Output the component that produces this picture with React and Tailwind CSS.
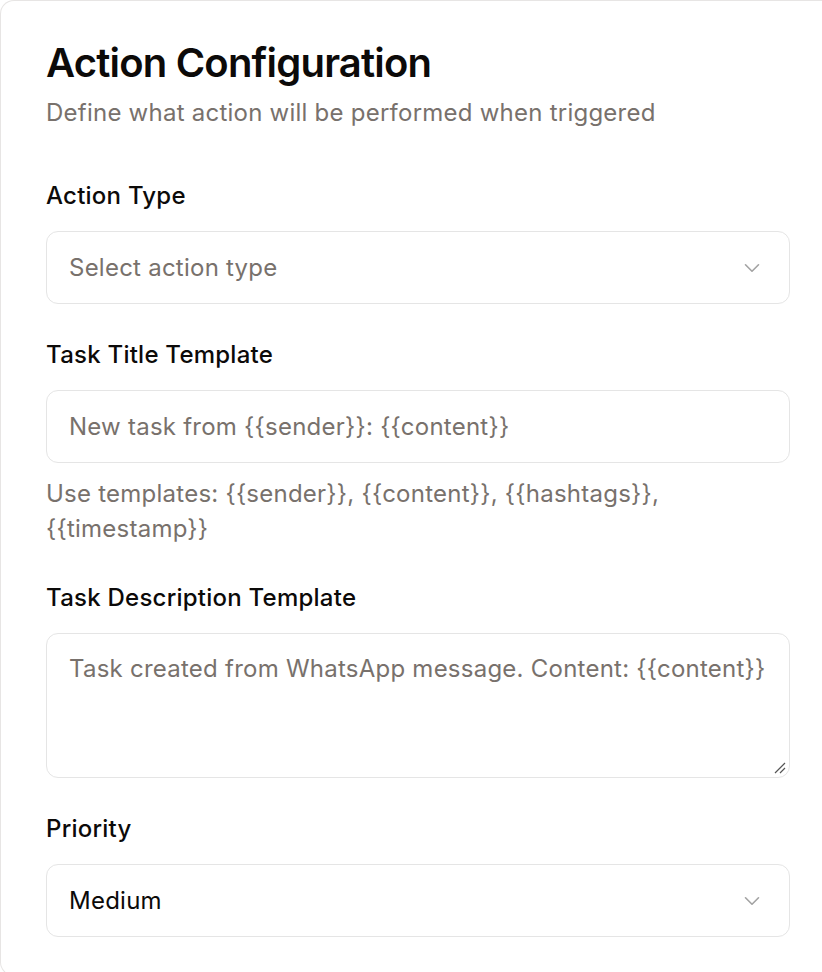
import React from "react";

function Chevron() {
  return (
    <svg width="26" height="26" viewBox="0 0 24 24" fill="none" stroke="#a3a3a3" strokeWidth="1.5" strokeLinecap="round" strokeLinejoin="round">
      <path d="M6 9l6 6 6-6" />
    </svg>
  );
}

function Label({ children }) {
  return <div className="text-[24px] leading-[30px] font-medium tracking-[0.01em] text-[#0c0a09]">{children}</div>;
}

function Select({ children, placeholder }) {
  return (
    <div className="h-[73px] rounded-[12px] border border-[#e5e5e5] bg-white flex items-center justify-between pl-[22px] pr-[24px]">
      <span className={"text-[24px] tracking-[0.01em] " + (placeholder ? "text-[#78716c]" : "text-[#0c0a09]")}>{children}</span>
      <Chevron />
    </div>
  );
}

export default function App() {
  return (
    <div className="w-[822px] h-[972px] overflow-hidden bg-white" style={{ fontFamily: "Inter, 'Noto Sans', sans-serif" }}>
      <div className="w-[822px] h-[976px] border border-r-0 border-[#e7e5e4] rounded-l-[14px] bg-white pl-[45px] pt-[38px]">
        <div className="w-[744px]">
          <h1 className="text-[40px] leading-[48px] font-semibold tracking-[-0.02em] text-[#0c0a09]">Action Configuration</h1>
          <p className="mt-[11px] text-[24px] leading-[30px] tracking-[0.01em] text-[#78716c]">Define what action will be performed when triggered</p>

          <div className="mt-[53px]">
            <Label>Action Type</Label>
            <div className="mt-[20px]">
              <Select placeholder>Select action type</Select>
            </div>
          </div>

          <div className="mt-[36px]">
            <Label>Task Title Template</Label>
            <div className="mt-[20px] h-[73px] rounded-[12px] border border-[#e5e5e5] flex items-center pl-[22px]">
              <span className="text-[24px] tracking-[0.01em] text-[#78716c]">{"New task from {{sender}}: {{content}}"}</span>
            </div>
            <p className="mt-[13px] text-[24px] leading-[35px] tracking-[0.01em] text-[#78716c]">
              {"Use templates: {{sender}}, {{content}}, {{hashtags}},"}
              <br />
              {"{{timestamp}}"}
            </p>
          </div>

          <div className="mt-[37px]">
            <Label>Task Description Template</Label>
            <div className="relative mt-[20px] h-[145px] rounded-[12px] border border-[#e5e5e5] pl-[22px] pt-[17px]">
              <span className="text-[24px] tracking-[0.01em] text-[#78716c]">{"Task created from WhatsApp message. Content: {{content}}"}</span>
              <svg className="absolute right-[2px] bottom-[2px]" width="14" height="14" viewBox="0 0 14 14" stroke="#555" strokeWidth="1.2">
                <path d="M2 12L12 2M7 12L12 7" />
              </svg>
            </div>
          </div>

          <div className="mt-[36px]">
            <Label>Priority</Label>
            <div className="mt-[20px]">
              <Select>Medium</Select>
            </div>
          </div>
        </div>
      </div>
    </div>
  );
}
